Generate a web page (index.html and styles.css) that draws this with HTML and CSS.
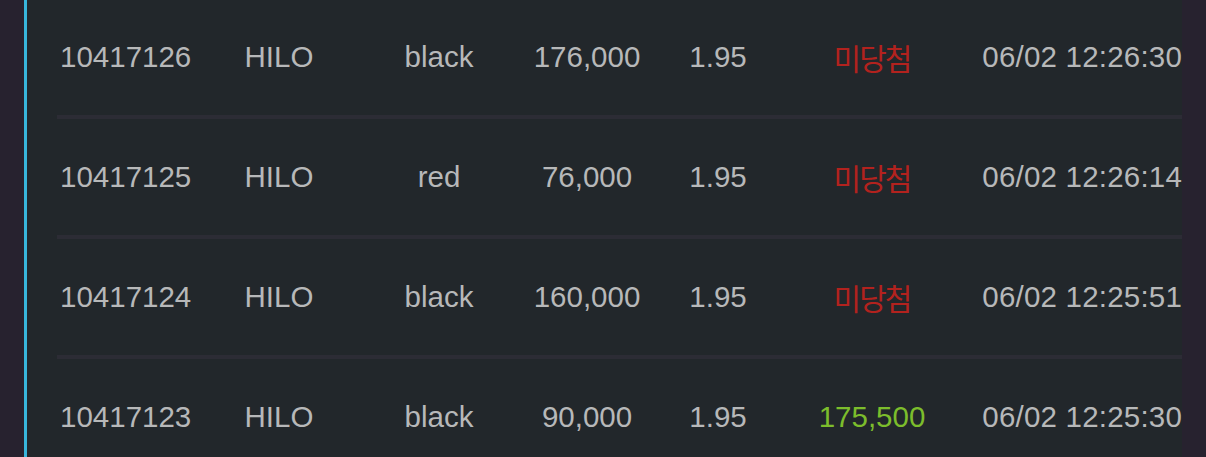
FILE: index.html
```html
<!DOCTYPE html>
<html lang="ko">
<head>
<meta charset="utf-8">
<title>Bet history</title>
<link rel="stylesheet" href="styles.css">
</head>
<body>
<div class="frame">
  <div class="side side-left"></div>
  <div class="panel">
    <div class="rows">
      <div class="row">
        <span class="cell id">10417126</span>
        <span class="cell">HILO</span>
        <span class="cell">black</span>
        <span class="cell">176,000</span>
        <span class="cell">1.95</span>
        <span class="cell lose">미당첨</span>
        <span class="cell date">06/02 12:26:30</span>
      </div>
      <div class="row">
        <span class="cell id">10417125</span>
        <span class="cell">HILO</span>
        <span class="cell">red</span>
        <span class="cell">76,000</span>
        <span class="cell">1.95</span>
        <span class="cell lose">미당첨</span>
        <span class="cell date">06/02 12:26:14</span>
      </div>
      <div class="row">
        <span class="cell id">10417124</span>
        <span class="cell">HILO</span>
        <span class="cell">black</span>
        <span class="cell">160,000</span>
        <span class="cell">1.95</span>
        <span class="cell lose">미당첨</span>
        <span class="cell date">06/02 12:25:51</span>
      </div>
      <div class="row">
        <span class="cell id">10417123</span>
        <span class="cell">HILO</span>
        <span class="cell">black</span>
        <span class="cell">90,000</span>
        <span class="cell">1.95</span>
        <span class="cell win">175,500</span>
        <span class="cell date">06/02 12:25:30</span>
      </div>
    </div>
  </div>
  <div class="side side-right"></div>
</div>
</body>
</html>
```

FILE: styles.css
```css
html, body {
  margin: 0;
  padding: 0;
  height: 100%;
  background: #26222f;
  overflow: hidden;
}

.frame {
  display: flex;
  height: 457px;
}

.side {
  width: 24px;
  flex: 0 0 24px;
  background: #27222f;
}

.side-left {
  border-right: 3px solid #38b6dc;
}

.panel {
  flex: 1;
  background: #22272b;
  overflow: hidden;
  padding-left: 30px;
}

.rows {
  margin-top: -1px;
}

.row {
  display: grid;
  grid-template-columns: 137px 170px 150px 146px 116px 192px 1fr;
  align-items: center;
  height: 116px;
  border-bottom: 4px solid #2c2c35;
  font-family: "Liberation Sans", Arial, sans-serif;
  font-size: 29.5px;
  color: #b7b8b9;
}

.cell {
  text-align: center;
  white-space: nowrap;
}

.id {
  text-align: left;
  padding-left: 3px;
}

.date {
  text-align: right;
  padding-right: 2px;
  margin-right: -2px;
  letter-spacing: 0.2px;
}

.lose {
  color: #b2221e;
  font-family: "Noto Sans CJK KR", sans-serif;
  font-size: 30px;
  letter-spacing: -2px;
}

.win {
  color: #7cbd2c;
}
```
